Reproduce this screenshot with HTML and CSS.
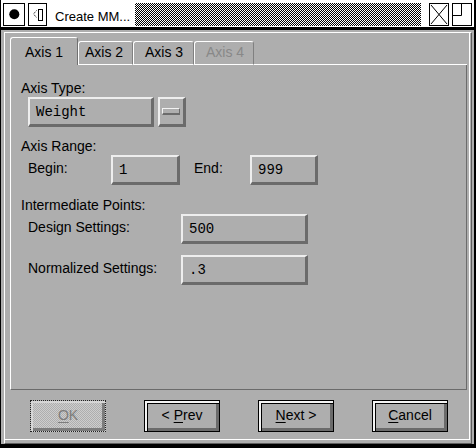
FILE: index.html
```html
<!DOCTYPE html>
<html>
<head>
<meta charset="utf-8">
<link rel="stylesheet" href="styles.css">
</head>
<body>
<div class="window">
  <div class="titlebar">
    <span class="tb-box tb-close">
      <svg width="22" height="23" viewBox="0 0 22 23"><rect x="0.5" y="0.5" width="21" height="22" fill="#fff" stroke="#000"/><circle cx="11.3" cy="11.3" r="5" fill="#000"/></svg>
    </span>
    <span class="tb-box tb-iconify">
      <svg width="19" height="23" viewBox="0 0 19 23"><rect x="0.5" y="0.5" width="18" height="22" fill="#fff" stroke="#000"/><polyline points="8.5,7.5 5.5,11 8.5,14.5" fill="none" stroke="#000" stroke-dasharray="1 1"/><rect x="10.5" y="6.5" width="4" height="11" fill="none" stroke="#000"/></svg>
    </span>
    <span class="tb-title">Create MM...</span>
    <span class="tb-stipple"></span>
    <span class="tb-box tb-x">
      <svg width="20" height="23" viewBox="0 0 20 23"><rect x="0.5" y="0.5" width="19" height="22" fill="#fff" stroke="#000"/><path d="M2 2 L18 21 M18 2 L2 21" stroke="#000" stroke-width="1" fill="none"/></svg>
    </span>
    <span class="tb-box tb-max">
      <svg width="20" height="23" viewBox="0 0 20 23"><rect x="0.5" y="0.5" width="19" height="22" fill="#fff" stroke="#000"/><path d="M9.5 1 V12.5 H1" stroke="#000" fill="none"/></svg>
    </span>
  </div>
  <div class="frame">
    <div class="dialog">
      <div class="dialog-inner">
        <div class="tabs">
          <div class="tab tab-active t1">Axis 1</div>
          <div class="tab t2">Axis 2</div>
          <div class="tab t3">Axis 3</div>
          <div class="tab t4 tab-disabled">Axis 4</div>
          <div class="tab-fill"></div>
        </div>
        <div class="panel">
          <div class="label l-type">Axis Type:</div>
          <div class="row row-type">
            <div class="bevel option">Weight</div>
            <div class="bevel option-btn"><span class="option-bar"></span></div>
          </div>
          <div class="label l-range">Axis Range:</div>
          <div class="row row-range">
            <span class="sublabel s-begin">Begin:</span>
            <div class="bevel field f-begin">1</div>
            <span class="sublabel s-end">End:</span>
            <div class="bevel field f-end">999</div>
          </div>
          <div class="label l-inter">Intermediate Points:</div>
          <div class="row row-design">
            <span class="sublabel s-wide">Design Settings:</span>
            <div class="bevel field f-wide">500</div>
          </div>
          <div class="row row-norm">
            <span class="sublabel s-wide">Normalized Settings:</span>
            <div class="bevel field f-wide">.3</div>
          </div>
        </div>
        <div class="buttons">
          <div class="btn btn-disabled"><span><u>O</u>K</span></div>
          <div class="btn"><span>&lt; <u>P</u>rev</span></div>
          <div class="btn"><span><u>N</u>ext &gt;</span></div>
          <div class="btn"><span><u>C</u>ancel</span></div>
        </div>
      </div>
    </div>
  </div>
</div>
</body>
</html>
```

FILE: styles.css
```css
html, body {
  margin: 0;
  padding: 0;
  background: #000;
}
body {
  width: 476px;
  height: 448px;
  overflow: hidden;
  font-family: "Liberation Sans", Arial, sans-serif;
  font-size: 14px;
  color: #000;
}
.window {
  width: 476px;
  height: 448px;
  box-sizing: border-box;
  border-style: solid;
  border-color: #000;
  border-width: 0 2px 4px 1px;
  background: #aeaeae;
  display: flex;
  flex-direction: column;
}
.titlebar {
  box-sizing: border-box;
  height: 30px;
  flex: none;
  background: #fff;
  border-bottom: 3px solid #000;
  padding-top: 3px;
  display: flex;
  align-items: flex-start;
}
.tb-box {
  display: block;
  height: 23px;
  flex: none;
}
.tb-box svg { display: block; }
.tb-close { margin-left: 2px; width: 22px; }
.tb-iconify { margin-left: 3px; width: 19px; }
.tb-title {
  margin-left: 8px;
  margin-top: 6px;
  width: 80px;
  flex: none;
  font-size: 13px;
  line-height: 15px;
  white-space: nowrap;
}
.tb-stipple {
  width: 286px;
  height: 23px;
  flex: none;
  background: repeating-conic-gradient(#000 0 25%, #fff 0 50%) 0 0 / 2px 2px;
}
.tb-x { margin-left: 8px; width: 20px; }
.tb-max { margin-left: 3px; width: 20px; }

.frame {
  flex: 1;
  padding: 2px 2px 0 3px;
  display: flex;
}
.dialog {
  flex: 1;
  border: 1px solid;
  border-color: #fff #5e5e5e #5e5e5e #fff;
  display: flex;
}
.dialog-inner {
  flex: 1;
  margin: 0 1px 3px 0;
  border-right: 1px solid #fff;
  border-bottom: 1px solid #fff;
  padding: 4px 0 0 5px;
  display: flex;
  flex-direction: column;
}

.tabs {
  display: flex;
  align-items: flex-end;
  height: 28px;
  width: 457px;
  flex: none;
}
.tab {
  box-sizing: border-box;
  height: 24px;
  border: 1px solid;
  border-color: #fff #808080 #fff #fff;
  border-radius: 3px 3px 0 0;
  padding: 2px 0 0 11px;
  line-height: 16px;
  white-space: nowrap;
  flex: none;
}
.tab-active {
  height: 28px;
  border-bottom: none;
  padding: 6px 0 0 14px;
  border-color: #fff #707070 #fff #fff;
}
.t1 { width: 68px; }
.t2 { width: 55px; padding-left: 6px; }
.t3 { width: 61px; }
.t4 { width: 60px; }
.tab-disabled { color: #888; }
.tab-fill {
  flex: 1;
  height: 1px;
  background: #fff;
}

.panel {
  box-sizing: border-box;
  width: 457px;
  height: 325px;
  flex: none;
  border: 1px solid;
  border-top: none;
  border-color: #fff #6b6b6b #6b6b6b #fff;
  padding-left: 10px;
}
.label {
  line-height: 16px;
  height: 16px;
  white-space: nowrap;
}
.l-type { margin-top: 15px; }
.l-range { margin-top: 11px; }
.l-inter { margin-top: 12px; }

.row {
  display: flex;
  align-items: center;
  margin-left: 7px;
  height: 30px;
}
.row-type { margin-top: 1px; }
.row-range { margin-top: 1px; }
.row-design { margin-top: 1px; }
.row-norm { margin-top: 11px; }

.bevel {
  box-sizing: border-box;
  height: 30px;
  border-style: solid;
  border-width: 2px 3px 3px 2px;
  border-color: #eeeeee #6b6b6b #6b6b6b #eeeeee;
  background: #aeaeae;
  display: flex;
  align-items: center;
  flex: none;
}
.option, .field {
  padding-left: 6px;
  font-family: "Liberation Mono", "Courier New", monospace;
  font-size: 14px;
}
.option { width: 126px; }
.option-btn {
  width: 28px;
  margin-left: 4px;
  justify-content: center;
  padding: 0 1px 1px 0;
}
.option-bar {
  display: block;
  box-sizing: border-box;
  width: 18px;
  height: 7px;
  border-style: solid;
  border-width: 1px 1px 2px 1px;
  border-color: #f2f2f2 #6b6b6b #6b6b6b #f2f2f2;
}
.sublabel {
  line-height: 16px;
  padding-bottom: 5px;
  white-space: nowrap;
  flex: none;
}
.s-begin { width: 83px; }
.f-begin { width: 69px; }
.s-end { width: 56px; margin-left: 14px; }
.f-end { width: 68px; }
.s-wide { width: 153px; }
.f-wide { width: 127px; }

.buttons {
  display: flex;
  justify-content: space-between;
  margin: 10px 21px 0 20px;
  height: 32px;
  flex: none;
}
.btn {
  box-sizing: border-box;
  width: 76px;
  height: 32px;
  border: 1px solid #000;
  background: #aeaeae;
  box-shadow: inset 2px 2px 0 #f4f4f4, inset 3px 3px 0 #000, inset -3px -3px 0 #6b6b6b;
  display: flex;
  align-items: center;
  justify-content: center;
  padding-bottom: 2px;
  line-height: 16px;
  white-space: nowrap;
}
.btn u {
  text-decoration: underline;
  text-underline-offset: 2px;
}
.btn-disabled {
  border: 1px dotted #222;
  color: #7c7c7c;
  background: repeating-conic-gradient(#cdcdcd 0 25%, #aeaeae 0 50%) 0 0 / 2px 2px;
  box-shadow: inset 2px 2px 0 #d6d6d6, inset -3px -3px 0 #7c7c7c;
}
```
